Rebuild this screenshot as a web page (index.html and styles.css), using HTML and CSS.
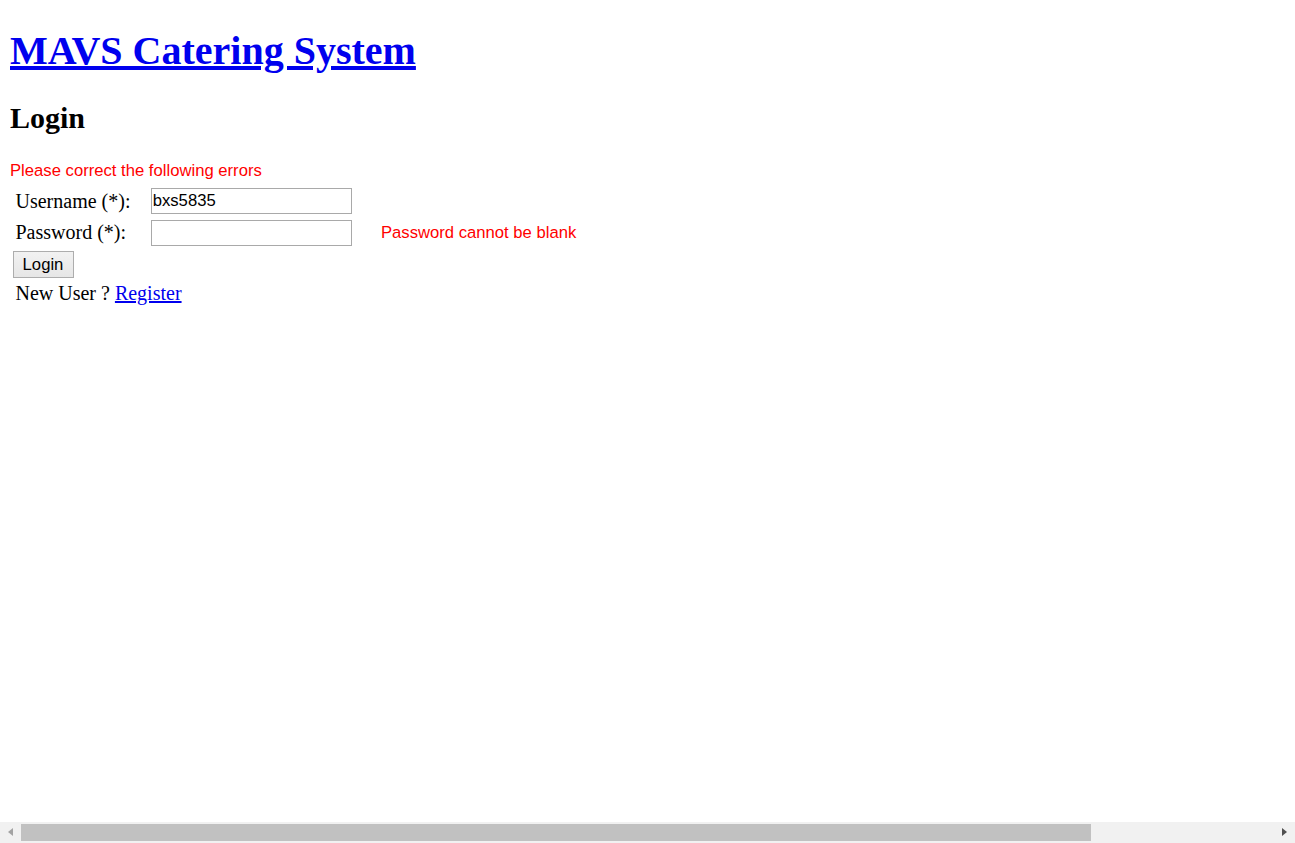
FILE: index.html
```html
<!DOCTYPE html>
<html>
<head>
<meta charset="utf-8">
<title>Login</title>
<link rel="stylesheet" href="styles.css">
</head>
<body>
<h1 class="title"><a class="title-link" href="#">MAVS Catering System</a></h1>
<h2 class="heading">Login</h2>
<form class="login-form">
  <div class="form-error">Please correct the following errors</div>
  <table class="form-table">
    <tr>
      <td class="label">Username (*):</td>
      <td class="field"><input class="text-input" type="text" value="bxs5835"></td>
      <td class="msg"></td>
    </tr>
    <tr>
      <td class="label">Password (*):</td>
      <td class="field"><input class="text-input" type="password" value=""></td>
      <td class="msg">Password cannot be blank</td>
    </tr>
    <tr>
      <td class="btn-cell"><button class="btn" type="button">Login</button></td>
    </tr>
    <tr>
      <td class="label" colspan="3">New User ? <a class="link" href="#">Register</a></td>
    </tr>
  </table>
</form>
<div class="hscroll">
  <div class="arrow arrow-left"></div>
  <div class="track"><div class="thumb"></div></div>
  <div class="arrow arrow-right"></div>
</div>
</body>
</html>
```

FILE: styles.css
```css
html, body {
  background: #fff;
}
body {
  margin: 10px;
  font-family: "Liberation Serif", "Times New Roman", serif;
  font-size: 20px;
  color: #000;
}
.title {
  font-size: 40px;
  font-weight: bold;
  margin: 16.8px 0 26.8px;
}
.title-link {
  color: #0000ee;
  text-decoration: underline;
}
.heading {
  font-size: 30px;
  font-weight: bold;
  margin: 24.9px 0 26.8px;
}
.login-form {
  margin: 0;
}
.form-error {
  font-family: "Liberation Sans", Arial, sans-serif;
  font-size: 16.67px;
  color: #ff0000;
}
.form-table {
  border-collapse: separate;
  border-spacing: 2.5px;
  font-size: 20px;
  margin: 3px 0 0 -2.5px;
}
.form-table td {
  padding: 1.75px 1.25px;
  vertical-align: middle;
}
.form-table td.label {
  padding-left: 6px;
}
.form-table td.field {
  padding-left: 17px;
}
.form-table td.msg {
  padding-left: 26px;
  font-family: "Liberation Sans", Arial, sans-serif;
  font-size: 16.67px;
  color: #ff0000;
}
.form-table td.btn-cell {
  padding-left: 3px;
  padding-bottom: 0;
}
.text-input {
  box-sizing: border-box;
  width: 201px;
  height: 26px;
  border: 1px solid #a9a9a9;
  padding: 1px 1px;
  font-family: "Liberation Sans", Arial, sans-serif;
  font-size: 16.67px;
  margin: 0;
  background: #fff;
  display: block;
}
.btn {
  box-sizing: border-box;
  width: 61px;
  height: 27px;
  border: 1px solid #adadad;
  border-radius: 0;
  background: linear-gradient(#f2f2f2, #e6e6e6);
  font-family: "Liberation Sans", Arial, sans-serif;
  font-size: 16.67px;
  padding: 0;
  margin: 0;
  color: #000;
  display: block;
}
.link {
  color: #0000ee;
  text-decoration: underline;
}
.hscroll {
  position: fixed;
  left: 0;
  right: 0;
  bottom: 0;
  height: 21px;
  background: #f1f1f1;
  display: flex;
  align-items: center;
}
.arrow {
  width: 21px;
  height: 21px;
  position: relative;
}
.arrow-left::after {
  content: "";
  position: absolute;
  left: 8px;
  top: 6px;
  border-top: 4.5px solid transparent;
  border-bottom: 4.5px solid transparent;
  border-right: 5px solid #a3a3a3;
}
.arrow-right::after {
  content: "";
  position: absolute;
  right: 8px;
  top: 6px;
  border-top: 4.5px solid transparent;
  border-bottom: 4.5px solid transparent;
  border-left: 5px solid #505050;
}
.track {
  flex: 1;
  height: 21px;
  display: flex;
  align-items: center;
}
.thumb {
  width: 1070px;
  height: 17px;
  background: #c1c1c1;
}
```
